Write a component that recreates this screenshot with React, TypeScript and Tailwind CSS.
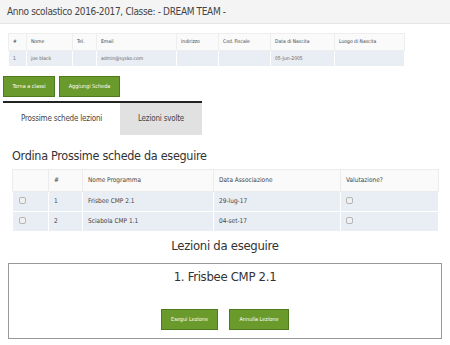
import React from "react";

const font = { fontFamily: '"DejaVu Sans Condensed", "Open Sans", sans-serif' };

const students = [
  { n: "1", nome: "joe black", tel: "", email: "admin@sysko.com", ind: "", cf: "", data: "05-Jun-2005", luogo: "" },
];

const schede = [
  { n: "1", nome: "Frisbee CMP 2.1", data: "29-lug-17" },
  { n: "2", nome: "Sciabola CMP 1.1", data: "04-set-17" },
];

const Checkbox = () => (
  <span className="inline-block w-[7px] h-[7px] rounded-[2px] border border-[#b5b5b5] bg-[#f0f0f0] align-middle" />
);

const GreenButton = ({ label, w }: { label: string; w: string }) => (
  <button className={`${w} h-[21px] bg-[#6b9a2c] border border-[#4f7a1c] text-white text-[5.5px] leading-none`}>
    {label}
  </button>
);

export default function App() {
  return (
    <div className="w-[450px] h-[345px] bg-white text-[#333] overflow-hidden" style={font}>
      <div className="h-[24px] bg-[#f4f4f4] border-b border-[#e6e6e6] flex items-center px-[7px]">
        <span className="text-[10px] tracking-[-0.35px] text-[#444]">Anno scolastico 2016-2017, Classe: - DREAM TEAM -</span>
      </div>

      <div className="pl-[8px] pt-[9px]">
        <table className="w-[396px] border-collapse text-[5px] text-[#444] table-fixed">
          <colgroup>
            <col className="w-[18px]" />
            <col className="w-[46px]" />
            <col className="w-[24px]" />
            <col className="w-[80px]" />
            <col className="w-[42px]" />
            <col className="w-[52px]" />
            <col className="w-[64px]" />
            <col className="w-[70px]" />
          </colgroup>
          <thead>
            <tr className="h-[17px] bg-[#fafafa]">
              {["#", "Nome", "Tel.", "Email", "Indirizzo", "Cod. Fiscale", "Data di Nascita", "Luogo di Nascita"].map(h => (
                <th key={h} className="text-left font-normal px-[4px] border border-[#eeeeee]">{h}</th>
              ))}
            </tr>
          </thead>
          <tbody>
            {students.map(s => (
              <tr key={s.n} className="h-[16px] bg-[#e9edf4]">
                {[s.n, s.nome, s.tel, s.email, s.ind, s.cf, s.data, s.luogo].map((v, i) => (
                  <td key={i} className="px-[4px] border border-[#ffffff] text-[#666]">{v}</td>
                ))}
              </tr>
            ))}
          </tbody>
        </table>
      </div>

      <div className="flex gap-[4px] pl-[3px] pt-[9px]">
        <GreenButton label="Torna a classi" w="w-[52px]" />
        <GreenButton label="Aggiungi Scheda" w="w-[61px]" />
      </div>

      <div className="ml-[3px] mt-[4px] w-[199px] border-t-2 border-[#222]">
        <div className="flex h-[32px] text-[8px] tracking-[-0.2px]">
          <div className="w-[117px] flex items-center justify-center text-[#444]">Prossime schede lezioni</div>
          <div className="w-[82px] flex items-center justify-center bg-[#e1e1e1] text-[#444]">Lezioni svolte</div>
        </div>
      </div>

      <div className="h-[34px] pl-[12px] pt-[14px] text-[12.5px] tracking-[-0.3px] leading-[14px] text-[#333]">
        Ordina Prossime schede da eseguire
      </div>

      <div className="pl-[12px]">
        <table className="w-[426px] border-collapse table-fixed text-[6.5px] text-[#444]">
          <colgroup>
            <col className="w-[36px]" />
            <col className="w-[34px]" />
            <col className="w-[131px]" />
            <col className="w-[127px]" />
            <col className="w-[98px]" />
          </colgroup>
          <thead>
            <tr className="h-[22px] bg-[#fafafa]">
              {["", "#", "Nome Programma", "Data Associazione", "Valutazione?"].map((h, i) => (
                <th key={i} className="text-left font-normal px-[5px] border border-[#ececec]">{h}</th>
              ))}
            </tr>
          </thead>
          <tbody>
            {schede.map(s => (
              <tr key={s.n} className="h-[20px] bg-[#e9edf4]">
                <td className="px-[6px] border border-white"><Checkbox /></td>
                <td className="px-[5px] border border-white">{s.n}</td>
                <td className="px-[5px] border border-white">{s.nome}</td>
                <td className="px-[5px] border border-white">{s.data}</td>
                <td className="px-[5px] border border-white"><Checkbox /></td>
              </tr>
            ))}
          </tbody>
        </table>
      </div>

      <div className="text-center text-[13px] tracking-[-0.3px] text-[#333] pt-[6px] leading-[16px]">Lezioni da eseguire</div>

      <div className="mx-[8px] mt-[9px] h-[76px] border border-[#999] flex flex-col items-center">
        <div className="text-[13px] tracking-[-0.3px] text-[#333] pt-[5px] leading-[16px]">1. Frisbee CMP 2.1</div>
        <div className="flex gap-[11px] mt-[24px]">
          <GreenButton label="Esegui Lezione" w="w-[57px]" />
          <GreenButton label="Annulla Lezione" w="w-[60px]" />
        </div>
      </div>
    </div>
  );
}
